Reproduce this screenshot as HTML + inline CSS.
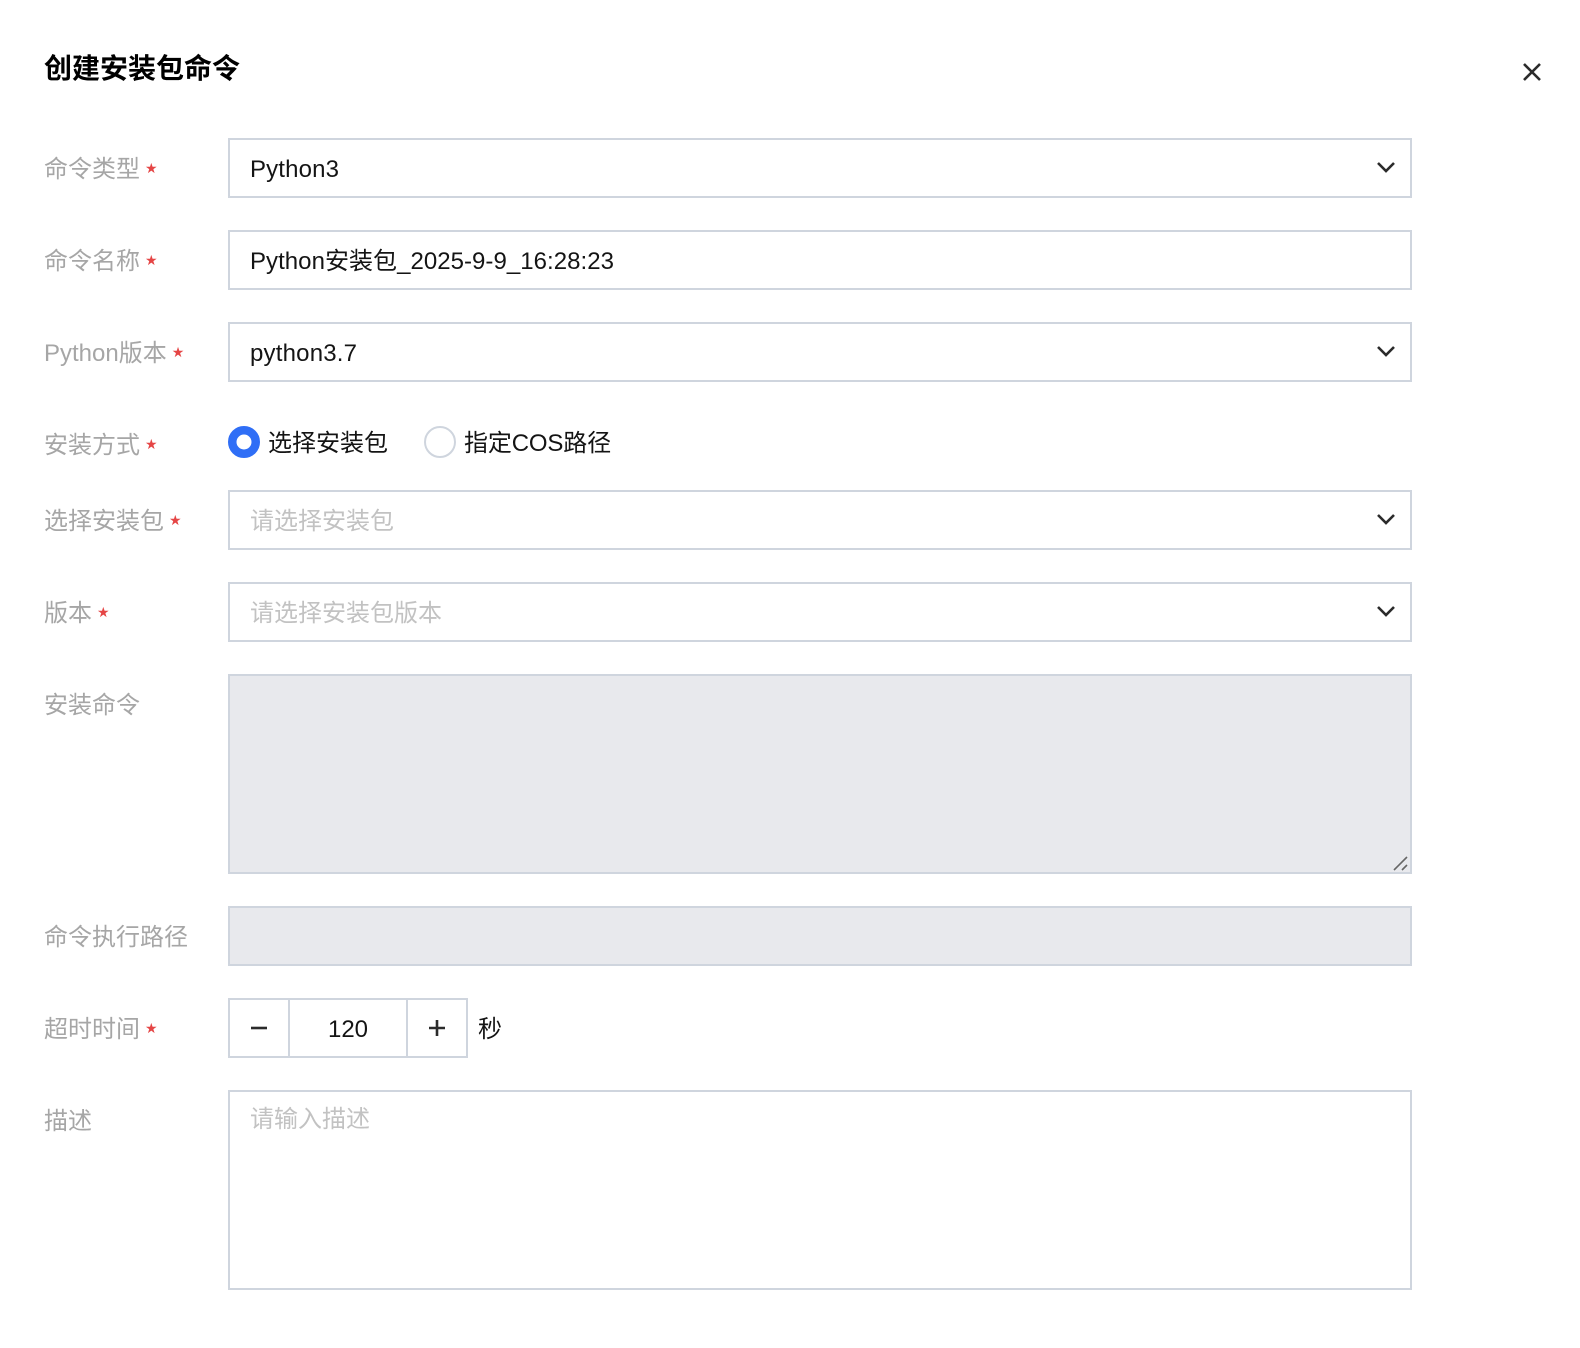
<!DOCTYPE html>
<html lang="zh"><head><meta charset="utf-8"><style>
html,body{margin:0;padding:0;background:#fff}
body{width:1580px;height:1348px;position:relative;overflow:hidden;font-family:"Liberation Sans","Noto Sans CJK SC",sans-serif;font-size:24px;color:#141414}
.t{position:absolute;white-space:nowrap;line-height:32px}
.l{left:44px;color:#a6a6a6}
.l i{font-style:normal;color:#e54545;font-size:14px;line-height:12px;margin-left:5px;display:inline-block;vertical-align:4px;font-family:"DejaVu Sans",sans-serif}
.b{position:absolute;left:228px;width:1184px;height:60px;box-sizing:border-box;border:2px solid #cfd5de;background:#fff}
.v{left:250px}.p{left:250px;color:#c2c2c2}
.g{background:#e8e9ed}
svg{position:absolute}
</style></head><body>
<div class="t" style="left:44px;top:51px;font-size:28px;line-height:36px;font-weight:700;color:#000">创建安装包命令</div>
<svg style="left:1520px;top:60px" width="24" height="24" viewBox="0 0 24 24"><path d="M4 4L20 20M20 4L4 20" stroke="#2b2b2b" stroke-width="2.6" fill="none"/></svg>

<div class="t l" style="top:154px">命令类型<i>★</i></div>
<div class="b" style="top:138px"></div><div class="t v" style="top:154px;letter-spacing:.15px">Python3</div>
<svg style="left:1376px;top:160px" width="20" height="14" viewBox="0 0 20 14"><path d="M2 3L10 11L18 3" stroke="#2b2b2b" stroke-width="2.6" fill="none"/></svg>

<div class="t l" style="top:246px">命令名称<i>★</i></div>
<div class="b" style="top:230px"></div><div class="t v" style="top:246px;letter-spacing:.04px">Python安装包_2025-9-9_16:28:23</div>

<div class="t l" style="top:338px">Python版本<i>★</i></div>
<div class="b" style="top:322px"></div><div class="t v" style="top:338px;letter-spacing:.2px">python3.7</div>
<svg style="left:1376px;top:344px" width="20" height="14" viewBox="0 0 20 14"><path d="M2 3L10 11L18 3" stroke="#2b2b2b" stroke-width="2.6" fill="none"/></svg>

<div class="t l" style="top:430px">安装方式<i>★</i></div>
<svg style="left:228px;top:426px" width="32" height="32" viewBox="0 0 32 32"><circle cx="16" cy="16" r="11.75" fill="#fff" stroke="#2f6ef6" stroke-width="8.5"/></svg>
<div class="t" style="left:268px;top:428px">选择安装包</div>
<svg style="left:424px;top:426px" width="32" height="32" viewBox="0 0 32 32"><circle cx="16" cy="16" r="15" fill="#fff" stroke="#cfd5de" stroke-width="2"/></svg>
<div class="t" style="left:464px;top:428px;letter-spacing:-.15px">指定COS路径</div>

<div class="t l" style="top:506px">选择安装包<i>★</i></div>
<div class="b" style="top:490px"></div><div class="t p" style="top:506px">请选择安装包</div>
<svg style="left:1376px;top:512px" width="20" height="14" viewBox="0 0 20 14"><path d="M2 3L10 11L18 3" stroke="#2b2b2b" stroke-width="2.6" fill="none"/></svg>

<div class="t l" style="top:598px">版本<i>★</i></div>
<div class="b" style="top:582px"></div><div class="t p" style="top:598px">请选择安装包版本</div>
<svg style="left:1376px;top:604px" width="20" height="14" viewBox="0 0 20 14"><path d="M2 3L10 11L18 3" stroke="#2b2b2b" stroke-width="2.6" fill="none"/></svg>

<div class="t l" style="top:690px">安装命令</div>
<div class="b g" style="top:674px;height:200px"></div>
<svg style="left:1392px;top:854px" width="18" height="18" viewBox="0 0 18 18"><path d="M2 16L15 3M10 16L15 11" stroke="#666" stroke-width="1.6" fill="none"/></svg>

<div class="t l" style="top:922px">命令执行路径</div>
<div class="b g" style="top:906px"></div>

<div class="t l" style="top:1014px">超时时间<i>★</i></div>
<div class="b" style="top:998px;width:240px"></div>
<div style="position:absolute;left:288px;top:998px;width:2px;height:60px;background:#cfd5de"></div>
<div style="position:absolute;left:406px;top:998px;width:2px;height:60px;background:#cfd5de"></div>
<svg style="left:250px;top:1020px" width="18" height="16" viewBox="0 0 18 16"><path d="M1 8H17" stroke="#2b2b2b" stroke-width="2.6"/></svg>
<svg style="left:428px;top:1019px" width="18" height="18" viewBox="0 0 18 18"><path d="M1 9H17M9 1V17" stroke="#2b2b2b" stroke-width="2.6"/></svg>
<div class="t" style="left:290px;width:116px;text-align:center;top:1014px">120</div>
<div class="t" style="left:478px;top:1014px">秒</div>

<div class="t l" style="top:1106px">描述</div>
<div class="b" style="top:1090px;height:200px"></div>
<div class="t p" style="top:1104px">请输入描述</div>
</body></html>
